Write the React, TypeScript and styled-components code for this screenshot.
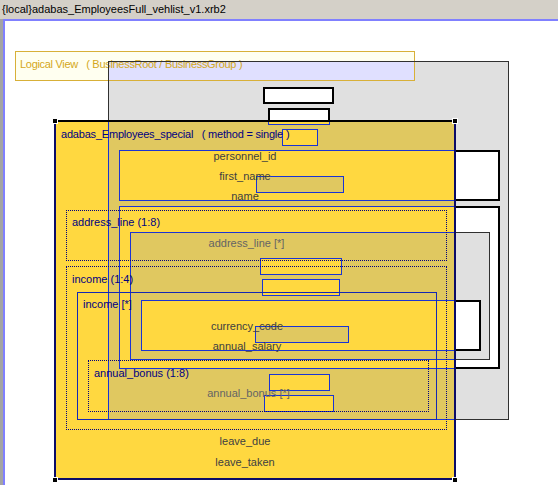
import React from 'react';
import styled, { createGlobalStyle } from 'styled-components';

// canvas origin on the page (inside the blue frame)
const OX = 5;
const OY = 21;

const YELLOW = '#ffd840';
const YELLOW_DIM = '#e0c860';
const GHOST_LINE = '#1a34d4';
const NAVY = '#000080';

const GlobalStyle = createGlobalStyle`
  html, body {
    margin: 0;
    padding: 0;
    background: #fff;
  }
  body {
    font-family: "Liberation Sans", Arial, sans-serif;
    font-size: 11px;
  }
`;

const Window = styled.div`
  width: 558px;
  height: 485px;
  display: flex;
  flex-direction: column;
  overflow: hidden;
  background: #d4d0c8;
`;

const TitleBar = styled.div`
  height: 18px;
  line-height: 18px;
  padding-left: 2px;
  color: #000;
  white-space: nowrap;
`;

const Frame = styled.div`
  flex: 1;
  display: flex;
  border-top: 1px solid #d4d0c8;
  padding-left: 3px;
  background: #a4a4a4;
`;

const Canvas = styled.div`
  flex: 1;
  position: relative;
  background: #fff;
  border-left: 2px solid #8080ff;
  border-top: 2px solid #8080ff;
`;

interface Rect {
  $x: number;
  $y: number;
  $w: number;
  $h: number;
}

type Kind = 'well' | 'slot';

const GrayNode = styled.div<Rect & { $kind: Kind; $ghost: boolean }>`
  position: absolute;
  left: ${(p) => p.$x}px;
  top: ${(p) => p.$y}px;
  width: ${(p) => p.$w}px;
  height: ${(p) => p.$h}px;
  box-sizing: border-box;
  background: ${(p) =>
    p.$ghost ? (p.$kind === 'slot' ? YELLOW : YELLOW_DIM) : p.$kind === 'slot' ? '#fff' : '#e0e0e0'};
  border: ${(p) =>
    p.$ghost ? `1px solid ${GHOST_LINE}` : p.$kind === 'slot' ? '2px solid #000' : '1px solid #303030'};
`;

const FrameLine = styled.div<Rect>`
  position: absolute;
  left: ${(p) => p.$x}px;
  top: ${(p) => p.$y}px;
  width: ${(p) => p.$w}px;
  height: ${(p) => p.$h}px;
  box-sizing: border-box;
  border: 1px solid #303030;
`;

const LogicalBox = styled.div`
  position: absolute;
  left: ${15 - OX}px;
  top: ${51 - OY}px;
  width: 400px;
  height: 30px;
  box-sizing: border-box;
  border: 1px solid #d8b038;
  background: linear-gradient(#e0e0ff, #e0e0ff) 93px 10px / 305px 18px no-repeat, #fffff0;
  color: #d4a820;
  padding: 4px 0 0 4px;
  line-height: 16px;
  letter-spacing: -0.3px;
  white-space: pre;
`;

const Entity = styled.div`
  position: absolute;
  left: ${54 - OX}px;
  top: ${120 - OY}px;
  width: 402px;
  height: 360px;
  box-sizing: border-box;
  background: ${YELLOW};
  border: 2px solid #0c0c68;
  border-top-color: #000;
`;

const GhostClip = styled.div`
  position: absolute;
  inset: 0;
  overflow: hidden;
`;

const EntityBody = styled.div`
  position: relative;
  z-index: 1;
  display: flex;
  flex-direction: column;
`;

const Header = styled.div`
  height: 24px;
  line-height: 24px;
  padding-left: 5px;
  color: ${NAVY};
  letter-spacing: -0.2px;
  white-space: pre;
`;

const Field = styled.div<{ $h?: number; $muted?: boolean }>`
  height: ${(p) => p.$h ?? 20}px;
  line-height: ${(p) => p.$h ?? 20}px;
  padding-right: 20px;
  text-align: center;
  color: ${(p) => (p.$muted ? '#646464' : '#404040')};
  white-space: pre;
`;

const Group = styled.div<{ $top: number; $right: number; $pad: number; $solid?: boolean }>`
  margin: ${(p) => `${p.$top}px ${p.$right}px 0 10px`};
  padding-bottom: ${(p) => p.$pad}px;
  border: ${(p) => (p.$solid ? '1px solid #1428b4' : `1px dotted ${NAVY}`)};
  display: flex;
  flex-direction: column;
`;

const GroupLabel = styled.div<{ $h: number }>`
  height: ${(p) => p.$h}px;
  line-height: ${(p) => p.$h}px;
  padding-left: 5px;
  color: ${NAVY};
  white-space: pre;
`;

const Handle = styled.span<{ $right?: boolean; $bottom?: boolean }>`
  position: absolute;
  z-index: 2;
  width: 6px;
  height: 6px;
  box-sizing: border-box;
  background: #000;
  border: 1px solid #fff;
  ${(p) => (p.$right ? 'right: -4px;' : 'left: -4px;')}
  ${(p) => (p.$bottom ? 'bottom: -5px;' : 'top: -4px;')}
`;

// the gray layout, in page coordinates (x1, y1, x2, y2 inclusive)
const GRAY_NODES: { kind: Kind; box: [number, number, number, number] }[] = [
  { kind: 'well', box: [108, 61, 508, 419] },
  { kind: 'slot', box: [263, 87, 333, 103] },
  { kind: 'slot', box: [268, 108, 329, 124] },
  { kind: 'slot', box: [282, 129, 317, 145] },
  { kind: 'slot', box: [119, 150, 499, 200] },
  { kind: 'well', box: [256, 176, 343, 192] },
  { kind: 'slot', box: [119, 206, 499, 368] },
  { kind: 'well', box: [130, 232, 489, 359] },
  { kind: 'slot', box: [260, 258, 341, 274] },
  { kind: 'slot', box: [262, 279, 339, 295] },
  { kind: 'slot', box: [141, 300, 480, 350] },
  { kind: 'well', box: [255, 326, 348, 342] },
  { kind: 'slot', box: [269, 374, 329, 390] },
  { kind: 'slot', box: [264, 395, 333, 411] },
];

const GrayDiagram: React.FC<{ ghost?: boolean; ox: number; oy: number }> = ({ ghost = false, ox, oy }) => (
  <>
    {GRAY_NODES.map(({ kind, box: [x1, y1, x2, y2] }, i) => (
      <GrayNode
        key={i}
        $kind={kind}
        $ghost={ghost}
        $x={x1 - ox}
        $y={y1 - oy}
        $w={x2 - x1 + 1}
        $h={y2 - y1 + 1}
      />
    ))}
  </>
);

const App: React.FC = () => (
  <>
    <GlobalStyle />
    <Window>
      <TitleBar>{'{local}adabas_EmployeesFull_vehlist_v1.xrb2'}</TitleBar>
      <Frame>
        <Canvas>
          <GrayDiagram ox={OX} oy={OY} />
          <LogicalBox>{'Logical View   ( BusinessRoot / BusinessGroup )'}</LogicalBox>
          <FrameLine $x={108 - OX} $y={61 - OY} $w={401} $h={359} />

          <Entity>
            <GhostClip>
              <GrayDiagram ghost ox={56} oy={122} />
            </GhostClip>
            <EntityBody>
              <Header>{'adabas_Employees_special   ( method = single )'}</Header>
              <Field>personnel_id</Field>
              <Field>first_name</Field>
              <Field>name</Field>

              <Group $top={4} $right={7} $pad={7}>
                <GroupLabel $h={23}>address_line (1:8)</GroupLabel>
                <Field $h={19} $muted>address_line [*]</Field>
              </Group>

              <Group $top={5} $right={7} $pad={9}>
                <GroupLabel $h={25}>income (1:4)</GroupLabel>
                <Group $top={0} $right={9} $pad={7} $solid>
                  <GroupLabel $h={23}>income [*]</GroupLabel>
                  <Field>currency_code</Field>
                  <Field $h={21}>annual_salary</Field>
                  <Group $top={3} $right={7} $pad={9}>
                    <GroupLabel $h={24}>annual_bonus (1:8)</GroupLabel>
                    <Field $h={17} $muted>annual_bonus [*]</Field>
                  </Group>
                </Group>
              </Group>

              <Field $h={22}>leave_due</Field>
              <Field>leave_taken</Field>
            </EntityBody>
            <Handle />
            <Handle $right />
            <Handle $bottom />
            <Handle $right $bottom />
          </Entity>
        </Canvas>
      </Frame>
    </Window>
  </>
);

export default App;
